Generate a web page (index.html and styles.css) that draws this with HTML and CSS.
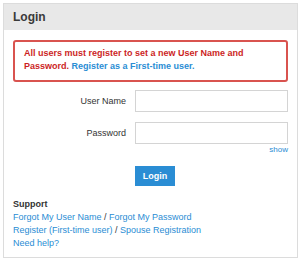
FILE: index.html
```html
<!DOCTYPE html>
<html lang="en">
  <head>
    <meta charset="UTF-8" />
    <meta name="viewport" content="width=device-width, initial-scale=1.0" />
    <title>Login</title>
    <link rel="stylesheet" href="styles.css">
  </head>
  <body>
    <div class="panel">
      <div class="panel-header">Login</div>
      <div class="panel-body">
        <div class="alert">
          All users must register to set a new User Name and Password.
          <a href="#">Register as a First-time user.</a>
        </div>

        <form class="login-form">
          <label class="field-label" for="username">User Name</label>
          <input type="text" class="field-input" id="username" />

          <label class="field-label" for="password">Password</label>
          <div class="field-wrap">
            <input type="password" class="field-input" id="password" />
            <a href="#" class="show-link">show</a>
          </div>

          <div></div>
          <div><button type="button" class="btn-login">Login</button></div>
        </form>

        <div class="support">
          <div class="support-title">Support</div>
          <div><a href="#">Forgot My User Name</a> / <a href="#">Forgot My Password</a></div>
          <div><a href="#">Register (First-time user)</a> / <a href="#">Spouse Registration</a></div>
          <div><a href="#">Need help?</a></div>
        </div>
      </div>
    </div>
  </body>
</html>
```

FILE: styles.css
```css
* {
  box-sizing: border-box;
}

body {
  margin: 0;
  padding: 3px;
  font-family: "Liberation Sans", Arial, sans-serif;
  font-size: 9px;
  color: #333;
  background-color: #fff;
}

a {
  color: #2a8dd4;
  text-decoration: none;
}

.panel {
  width: 295px;
  height: 255px;
  border: 1px solid #dcdcdc;
}

.panel-header {
  background-color: #e8e8e8;
  height: 26px;
  padding: 0 9px;
  font-size: 12px;
  line-height: 26px;
  font-weight: bold;
  color: #3a3a3a;
}

.panel-body {
  padding: 10px 9px 0;
}

.alert {
  border: 2px solid #d9534f;
  border-radius: 3px;
  padding: 5px 9px 7px;
  color: #cc1f1f;
  font-weight: bold;
  font-size: 9px;
  line-height: 13px;
}

.login-form {
  display: grid;
  grid-template-columns: 113px 1fr;
  column-gap: 9px;
  row-gap: 10px;
  margin-top: 8px;
  align-items: start;
}

.field-label {
  text-align: right;
  line-height: 22px;
  color: #333;
}

.field-input {
  width: 100%;
  height: 22px;
  border: 1px solid #d4d4d4;
  border-radius: 0;
  margin: 0;
}

.field-wrap {
  display: flex;
  flex-direction: column;
}

.show-link {
  align-self: flex-end;
  font-size: 8px;
  line-height: 10px;
  margin-top: 1px;
}

.btn-login {
  background-color: #2a8dd4;
  color: #fff;
  border: none;
  height: 20px;
  width: 40px;
  padding: 0;
  font-family: inherit;
  font-size: 9px;
  font-weight: bold;
  margin-top: 1px;
}

.support {
  margin-top: 12px;
  line-height: 13px;
  font-size: 9px;
}

.support-title {
  font-weight: bold;
  color: #333;
}
```
